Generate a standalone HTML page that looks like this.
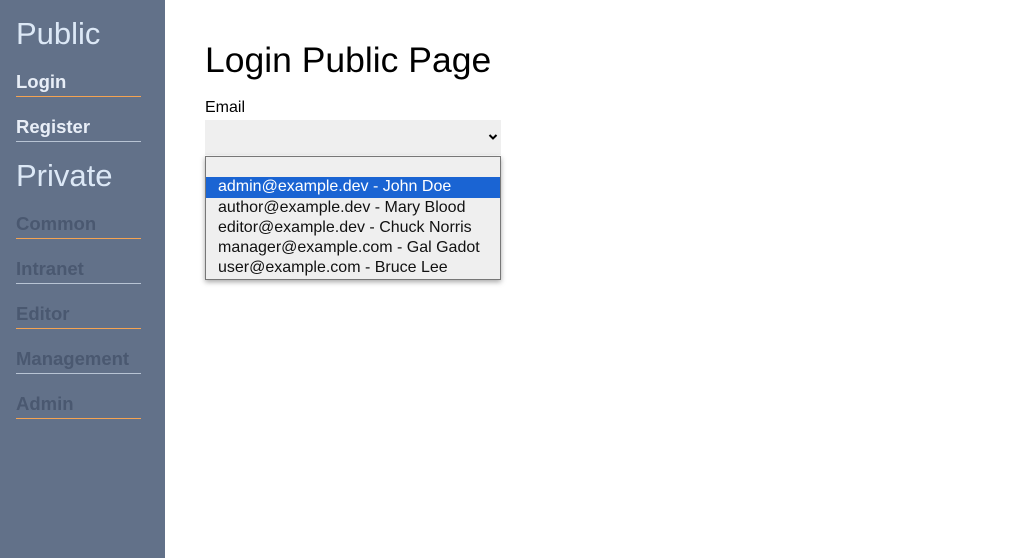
<!DOCTYPE html>
<html><head><style>
*{margin:0;padding:0;box-sizing:border-box}
body{width:1029px;height:558px;overflow:hidden;font-family:"Liberation Sans","DejaVu Sans",sans-serif;background:#fff;position:relative}
.side{position:absolute;left:0;top:0;width:165px;height:558px;background:#627189}
.h{position:absolute;left:16px;color:#dce8f6;font-size:31px;line-height:34px}
.l{position:absolute;left:16px;font-size:18.5px;font-weight:bold;line-height:22px}
.u{position:absolute;left:16px;width:125px;height:1px;background:#f4a352}
.u.g{background:#b8c4d4}
.on{color:#e8eef7}
.off{color:#4a5870}
.t{position:absolute;left:205px;top:40px;font-size:35.5px;line-height:40px;color:#000}
.lab{position:absolute;left:205px;top:99px;font-size:16px;color:#000}
.sel{position:absolute;left:205px;top:120px;width:296px;height:35px;background:#efefef}
.dd{position:absolute;left:205px;top:156px;width:296px;height:124px;background:#efefef;border:1px solid #777;box-shadow:0 2px 5px rgba(0,0,0,.35)}
.o{height:20.3px;line-height:20px;padding-left:12px;font-size:16px;color:#111;white-space:nowrap}
.o.s{background:#1a64d3;color:#fff}
</style></head><body>
<div class="side">
<div class="h" style="top:17px">Public</div>
<div class="l on" style="top:71px">Login</div><div class="u" style="top:96px"></div>
<div class="l on" style="top:116px">Register</div><div class="u g" style="top:141px"></div>
<div class="h" style="top:159px">Private</div>
<div class="l off" style="top:213px">Common</div><div class="u" style="top:238px"></div>
<div class="l off" style="top:258px">Intranet</div><div class="u g" style="top:283px"></div>
<div class="l off" style="top:303px">Editor</div><div class="u" style="top:328px"></div>
<div class="l off" style="top:348px">Management</div><div class="u g" style="top:373px"></div>
<div class="l off" style="top:393px">Admin</div><div class="u" style="top:418px"></div>
</div>
<div class="t">Login Public Page</div>
<div class="lab">Email</div>
<div class="sel"><svg style="position:absolute;left:283px;top:13px" width="10" height="8" viewBox="0 0 10 8"><path d="M1.5 2 L5 5.5 L8.5 2" stroke="#000" stroke-width="2" fill="none"/></svg></div>
<div class="dd">
<div class="o">&nbsp;</div>
<div class="o s">admin@example.dev - John Doe</div>
<div class="o">author@example.dev - Mary Blood</div>
<div class="o">editor@example.dev - Chuck Norris</div>
<div class="o">manager@example.com - Gal Gadot</div>
<div class="o">user@example.com - Bruce Lee</div>
</div>
</body></html>
